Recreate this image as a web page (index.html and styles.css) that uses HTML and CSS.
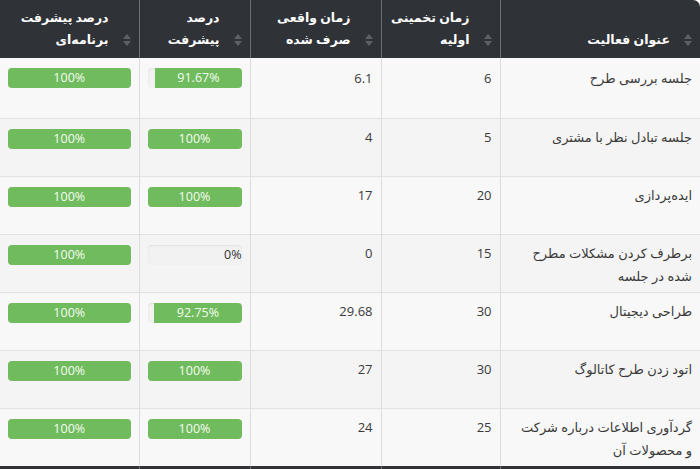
FILE: index.html
```html
<!DOCTYPE html>
<html lang="fa" dir="rtl">
<head>
<meta charset="utf-8">
<link rel="stylesheet" href="styles.css">
</head>
<body>
<table class="grid">
  <colgroup>
    <col class="c-title"><col class="c-est"><col class="c-real"><col class="c-prog"><col class="c-plan">
  </colgroup>
  <thead>
    <tr>
      <th><span class="sort"></span>عنوان فعالیت</th>
      <th><span class="sort"></span>زمان تخمینی<br>اولیه</th>
      <th><span class="sort"></span>زمان واقعی<br>صرف شده</th>
      <th><span class="sort"></span>درصد<br>پیشرفت</th>
      <th class="last"><span class="sort"></span>درصد پیشرفت<br>برنامه‌ای</th>
    </tr>
  </thead>
  <tbody>
    <tr>
      <td>جلسه بررسی طرح</td><td>6</td><td>6.1</td>
      <td><div class="bar"><div class="fill partial" style="width:91.67%">91.67%</div></div></td>
      <td class="last"><div class="bar"><div class="fill" style="width:100%">100%</div></div></td>
    </tr>
    <tr>
      <td>جلسه تبادل نظر با مشتری</td><td>5</td><td>4</td>
      <td><div class="bar"><div class="fill" style="width:100%">100%</div></div></td>
      <td class="last"><div class="bar"><div class="fill" style="width:100%">100%</div></div></td>
    </tr>
    <tr>
      <td>ایده‌پردازی</td><td>20</td><td>17</td>
      <td><div class="bar"><div class="fill" style="width:100%">100%</div></div></td>
      <td class="last"><div class="bar"><div class="fill" style="width:100%">100%</div></div></td>
    </tr>
    <tr>
      <td>برطرف کردن مشکلات مطرح<br>شده در جلسه</td><td>15</td><td>0</td>
      <td><div class="bar"><span class="zero">0%</span></div></td>
      <td class="last"><div class="bar"><div class="fill" style="width:100%">100%</div></div></td>
    </tr>
    <tr>
      <td>طراحی دیجیتال</td><td>30</td><td>29.68</td>
      <td><div class="bar"><div class="fill partial" style="width:92.75%">92.75%</div></div></td>
      <td class="last"><div class="bar"><div class="fill" style="width:100%">100%</div></div></td>
    </tr>
    <tr>
      <td>اتود زدن طرح کاتالوگ</td><td>30</td><td>27</td>
      <td><div class="bar"><div class="fill" style="width:100%">100%</div></div></td>
      <td class="last"><div class="bar"><div class="fill" style="width:100%">100%</div></div></td>
    </tr>
    <tr>
      <td>گردآوری اطلاعات درباره شرکت<br>و محصولات آن</td><td>25</td><td>24</td>
      <td><div class="bar"><div class="fill" style="width:100%">100%</div></div></td>
      <td class="last"><div class="bar"><div class="fill" style="width:100%">100%</div></div></td>
    </tr>
  </tbody>
  <tfoot>
    <tr><td></td><td></td><td></td><td></td><td class="last"></td></tr>
  </tfoot>
</table>
</body>
</html>
```

FILE: styles.css
```css
html, body {
  margin: 0;
  padding: 0;
  background: #ffffff;
}
body {
  font-family: "Open Sans", "DejaVu Sans", sans-serif;
  color: #333333;
  overflow: hidden;
}
.grid {
  width: 700px;
  border-collapse: collapse;
  table-layout: fixed;
  direction: rtl;
}
.c-title { width: 200px; }
.c-est { width: 119px; }
.c-real { width: 131px; }
.c-prog { width: 111px; }
.c-plan { width: 139px; }

.grid thead th {
  position: relative;
  background: #2f3237;
  color: #ffffff;
  font-size: 12.5px;
  font-weight: bold;
  line-height: 22px;
  text-align: right;
  vertical-align: bottom;
  white-space: nowrap;
  height: 58px;
  box-sizing: border-box;
  padding: 4px 30px 7px 4px;
  border-left: 1px solid #6b6e73;
}
.grid thead th:first-child {
  border-top-right-radius: 7px;
}
.grid thead th.last {
  border-left: none;
}
.sort {
  position: absolute;
  right: 8px;
  bottom: 12px;
  width: 8px;
  height: 12px;
}
.sort::before, .sort::after {
  content: "";
  position: absolute;
  left: 0;
  border-left: 4px solid transparent;
  border-right: 4px solid transparent;
}
.sort::before {
  top: 0;
  border-bottom: 5px solid #5d6166;
}
.sort::after {
  bottom: 0;
  border-top: 5px solid #5d6166;
}

.grid tbody td {
  height: 58px;
  box-sizing: border-box;
  font-size: 13px;
  line-height: 23px;
  text-align: right;
  vertical-align: top;
  white-space: nowrap;
  padding: 7px 8px 4px 8px;
  border-left: 1px solid #dcdcdc;
  border-top: 1px solid #e2e2e2;
  background: #f8f8f8;
  color: #3a3a3a;
}
.grid tbody tr:nth-child(even) td {
  background: #f4f4f4;
}
.grid tbody td.last {
  border-left: none;
}
.grid tbody tr:first-child td {
  border-top: none;
  height: 60px;
  padding-top: 9px;
}
.grid tbody tr:first-child .bar {
  margin-top: 1px;
}

.bar {
  position: relative;
  height: 20px;
  margin-top: 3px;
  background: #f2f2f2;
  border-radius: 4px;
  box-shadow: inset 0 1px 2px rgba(0,0,0,0.08);
  display: flex;
  direction: rtl;
}
.fill {
  height: 20px;
  background: #70bb5d;
  color: #f4fbf1;
  font-size: 12.5px;
  line-height: 19px;
  text-align: center;
  border-radius: 4px;
}
.fill.partial {
  border-radius: 0 4px 4px 0;
}
.zero {
  font-size: 12.5px;
  line-height: 19px;
  color: #333333;
}

.grid tfoot td {
  height: 20px;
  background: #2f3237;
  padding: 0;
  border-left: 1px solid #6b6e73;
}
.grid tfoot td.last {
  border-left: none;
}
```
